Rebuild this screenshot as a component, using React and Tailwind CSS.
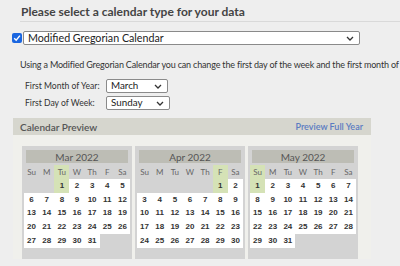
import React from "react";

const Chevron = () => (
    <svg width="8" height="5" viewBox="0 0 8 5" className="shrink-0">
        <path d="M1 1 L4 4 L7 1" fill="none" stroke="#333" strokeWidth="1.3" />
    </svg>
);

const FakeSelect = ({ value, className }) => (
    <div
        className={`flex items-center justify-between bg-white border border-[#8a8a8a] rounded-[2px] pl-[4px] pr-[5px] text-[#222] leading-none ${className}`}
    >
        <span>{value}</span>
        <Chevron />
    </div>
);

const dayNames = ["Su", "M", "Tu", "W", "Th", "F", "Sa"];

const MonthPanel = ({ title, start, days }) => {
    const cells = [];
    for (let i = 0; i < start; i++) cells.push(null);
    for (let d = 1; d <= days; d++) cells.push(d);
    while (cells.length % 7 !== 0) cells.push(null);

    return (
        <div className="w-[110px] h-[113px] bg-[#d3d3d3] pt-[4px] px-[2px]">
            <div className="mx-[2px] h-[13px] bg-[#bdbdb5] flex items-center justify-center text-[10px] text-[#555] leading-none">
                {title}
            </div>
            <div className="grid grid-cols-7 mt-[2px]">
                {dayNames.map((n, i) => (
                    <div
                        key={n}
                        className={`h-[14px] flex items-center justify-center text-[8px] text-[#666] ${
                            i === start ? "bg-[#d5e2b6]" : ""
                        }`}
                    >
                        {n}
                    </div>
                ))}
                {cells.map((d, i) => (
                    <div
                        key={i}
                        className={`h-[13.75px] flex items-center justify-center font-['Liberation_Sans',sans-serif] font-bold text-[8px] text-[#333] ${
                            d === null ? "" : d === 1 ? "bg-[#d5e2b6]" : "bg-white"
                        }`}
                    >
                        {d}
                    </div>
                ))}
            </div>
        </div>
    );
};

export default function App() {
    return (
        <div className="w-[400px] h-[266px] overflow-hidden bg-[#eeeeee] font-['Lato',sans-serif] text-[#333]">
            <div className="ml-[20px] pt-[6px] pb-[3px] border-b border-[#d9d9d9]">
                <h1 className="text-[12px] font-bold text-[#444] leading-none pl-[1px]">
                    Please select a calendar type for your data
                </h1>
            </div>

            <div className="flex items-center mt-[9px] ml-[12px]">
                <div className="w-[10px] h-[10px] rounded-[2px] bg-[#1a66e0] flex items-center justify-center">
                    <svg width="8" height="8" viewBox="0 0 8 8">
                        <path d="M1.2 4.2 L3.2 6.2 L6.9 1.6" fill="none" stroke="#fff" strokeWidth="1.4" />
                    </svg>
                </div>
                <FakeSelect value="Modified Gregorian Calendar" className="ml-[1px] w-[337px] h-[14px] text-[10.7px]" />
            </div>

            <p className="mt-[15px] ml-[20px] whitespace-nowrap text-[9px] tracking-[-0.17px] text-[#333] leading-none">
                Using a Modified Gregorian Calendar you can change the first day of the week and the first month of the year.
            </p>

            <div className="mt-[10px] ml-[25px] flex flex-col gap-[3px] text-[8.6px] leading-none">
                <div className="flex items-center">
                    <span className="w-[81px] whitespace-nowrap">First Month of Year:</span>
                    <FakeSelect value="March" className="w-[62px] h-[14px] text-[9.8px]" />
                </div>
                <div className="flex items-center">
                    <span className="w-[81px] whitespace-nowrap">First Day of Week:</span>
                    <FakeSelect value="Sunday" className="w-[64px] h-[14px] text-[9.8px]" />
                </div>
            </div>

            <div className="mt-[8px] ml-[13px] w-[358px] bg-[#f0f0ec]">
                <div className="h-[17px] bg-[#d6d6ce] flex items-center justify-between pl-[7px] pr-[8px] leading-none">
                    <span className="text-[10px] font-semibold text-[#555]">Calendar Preview</span>
                    <span className="text-[9px] font-semibold text-[#5b7cc2]">Preview Full Year</span>
                </div>
                <div className="flex gap-[3px] pl-[9px] pt-[11px]">
                    <MonthPanel title="Mar 2022" start={2} days={31} />
                    <MonthPanel title="Apr 2022" start={5} days={30} />
                    <MonthPanel title="May 2022" start={0} days={31} />
                </div>
            </div>
        </div>
    );
}
